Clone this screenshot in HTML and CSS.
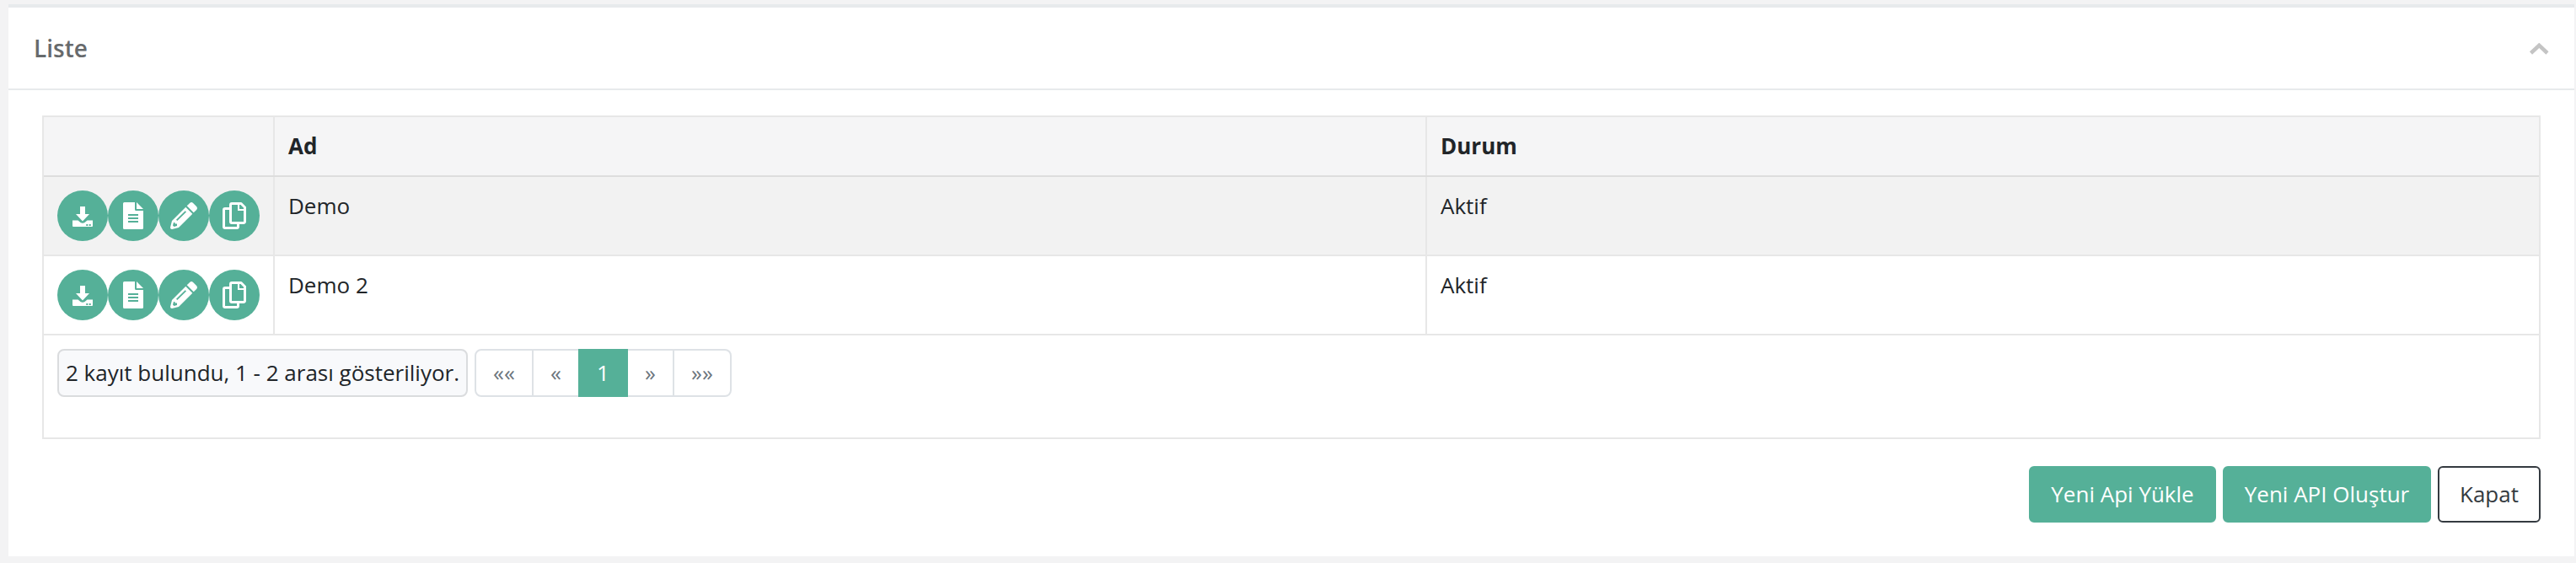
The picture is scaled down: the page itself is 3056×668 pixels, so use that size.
FILE: index.html
```html
<!DOCTYPE html>
<html lang="tr">
<head>
<meta charset="utf-8">
<title>Liste</title>
<link rel="stylesheet" href="styles.css">
</head>
<body>
<svg class="sprite" aria-hidden="true">
  <symbol id="download" viewBox="0 0 24 24"><path fill="currentColor" d="M9 0h6v9h5l-8 8.500L4 9h5zM0 16.500h6.500l3 2.500q2.500 1.500 5 0l3-2.500H24V23q0 1-1 1H1q-1 0-1-1zM16.300 21v2h2v-2zm3.400 0v2h2v-2z" fill-rule="evenodd"/></symbol>
  <symbol id="file" viewBox="0 0 24 32"><path fill="currentColor" fill-rule="evenodd" d="M1.500 0H14v8.500q0 1.500 1.500 1.500H24v20.500q0 1.500-1.500 1.500h-21Q0 32 0 30.500v-29Q0 0 1.500 0zM16 0l8 8h-8zM6 14v2h12v-2zm0 4v2h12v-2zm0 4v2h12v-2z"/></symbol>
  <symbol id="pencil" viewBox="0 0 32 32"><path fill="currentColor" fill-rule="evenodd" d="M18.300 5.800l8 8L10 30 2 32Q0 32 0 30l2-8zM19.700 4.300l3.400-3.400q2-1.700 4 0l4 4q1.700 2 0 4l-3.400 3.400zM7 20.800l1.300 1.300L19 11.500 17.700 10.200zM4 24l-1 3.500L4.500 29 8 28v-2.500H5.500V24z"/></symbol>
  <symbol id="copy" viewBox="0 0 28 32"><g fill="none" stroke="currentColor" stroke-width="3" stroke-linejoin="round"><path d="M8 7.500H3A1.500 1.500 0 0 0 1.500 9v20A1.500 1.500 0 0 0 3 30.500h14a1.500 1.500 0 0 0 1.500-1.500V25.500"/><path d="M11 1.500H22l4.500 4.500v17a1.500 1.500 0 0 1-1.500 1.500H11A1.500 1.500 0 0 1 9.500 23V3A1.500 1.500 0 0 1 11 1.500z"/></g><path d="M19 2v7h7" fill="none" stroke="currentColor" stroke-width="2"/></symbol>
</svg>
<section class="card">
  <header class="card-header">
    <h1 class="card-title">Liste</h1>
    <svg class="chevron" viewBox="0 0 24 14"><path d="M2.500 12L12.300 2.800l9.700 9.200" fill="none" stroke="currentColor" stroke-width="4.500"/></svg>
  </header>
  <div class="card-body">
    <div class="table">
      <div class="row head"><div class="cell"></div><div class="cell">Ad</div><div class="cell">Durum</div></div>
      <div class="row striped">
        <div class="cell actions">
          <a class="action"><svg class="i-download"><use href="#download"/></svg></a>
          <a class="action"><svg class="i-file"><use href="#file"/></svg></a>
          <a class="action"><svg class="i-pencil"><use href="#pencil"/></svg></a>
          <a class="action"><svg class="i-copy"><use href="#copy"/></svg></a>
        </div>
        <div class="cell">Demo</div><div class="cell">Aktif</div>
      </div>
      <div class="row">
        <div class="cell actions">
          <a class="action"><svg class="i-download"><use href="#download"/></svg></a>
          <a class="action"><svg class="i-file"><use href="#file"/></svg></a>
          <a class="action"><svg class="i-pencil"><use href="#pencil"/></svg></a>
          <a class="action"><svg class="i-copy"><use href="#copy"/></svg></a>
        </div>
        <div class="cell">Demo 2</div><div class="cell">Aktif</div>
      </div>
      <div class="pager">
        <span class="summary">2 kayıt bulundu, 1 - 2 arası gösteriliyor.</span>
        <nav class="pages"><a class="page first">««</a><a class="page prev">«</a><a class="page active">1</a><a class="page next">»</a><a class="page last">»»</a></nav>
      </div>
    </div>
    <div class="buttons">
      <button class="btn upload">Yeni Api Yükle</button>
      <button class="btn create">Yeni API Oluştur</button>
      <button class="btn close">Kapat</button>
    </div>
  </div>
</section>
</body>
</html>
```
FILE: styles.css
```css
* { box-sizing: border-box; }
body {
  margin: 0;
  padding: 5px 2px 8px 10px;
  height: 668px;
  overflow: hidden;
  background: #f3f3f4;
  color: #212529;
  font: 26px/36px "Open Sans", sans-serif;
}
.sprite { display: none; }
.card { height: 655px; background: #fff; border-top: 4px solid #e7eaec; }
.card-header {
  display: flex;
  align-items: center;
  justify-content: space-between;
  height: 98px;
  padding: 0 30px;
  border-bottom: 2px solid #e7eaec;
}
.card-title { margin: 0; font-size: 28px; font-weight: 600; color: #676a6c; }
.chevron { width: 24px; height: 14px; margin-top: 2px; color: #c4c4c4; }
.card-body { padding: 30px 40px 0; }
.table { border: 2px solid #e7e7e7; }
.row {
  display: grid;
  grid-template-columns: 274px 1367px 1fr;
  height: 94px;
  border-bottom: 2px solid #e7e7e7;
}
.head { height: 71px; background: #f5f5f6; border-bottom-color: #ddd; font-weight: 700; }
.striped { background: #f2f2f2; }
.cell { padding: 16px 16px 0; border-right: 2px solid #e7e7e7; }
.cell:last-child { border-right: 0; }
.actions { display: flex; }
.action {
  display: flex;
  align-items: center;
  justify-content: center;
  width: 60px;
  height: 60px;
  border-radius: 50%;
  background: #55b098;
  color: #fff;
}
.i-download { width: 24px; height: 24px; margin-top: 2px; }
.i-file { width: 24px; height: 32px; }
.i-pencil { width: 32px; height: 32px; }
.i-copy { width: 28px; height: 32px; }
.pager { display: flex; gap: 8px; height: 121px; padding: 16px; }
.summary {
  width: 487px;
  height: 57px;
  padding: 8px 0 0 8px;
  border: 2px solid #dadcde;
  border-radius: 8px;
  background: #f8f9fb;
  white-space: nowrap;
}
.pages {
  display: flex;
  height: 57px;
  color: #6c757d;
}
.page { padding-top: 8px; border: 2px solid #dee2e6; border-left-width: 0; text-align: center; }
.first { width: 70px; border-left-width: 2px; border-radius: 8px 0 0 8px; }
.prev { width: 53px; border-right: 0; }
.active { width: 59px; padding-left: 2px; background: #55b098; border-color: #55b098; color: #fff; }
.next { width: 55px; }
.last { width: 68px; border-radius: 0 8px 8px 0; }
.buttons { display: flex; justify-content: flex-end; gap: 8px; margin-top: 32px; }
.btn {
  height: 67px;
  padding: 0 0 1px;
  border: 2px solid #55b098;
  border-radius: 6px;
  background: #55b098;
  color: #fff;
  font: inherit;
}
.upload { width: 222px; }
.create { width: 247px; }
.close { width: 122px; background: #fff; border-color: #343a40; color: #343a40; }
```
